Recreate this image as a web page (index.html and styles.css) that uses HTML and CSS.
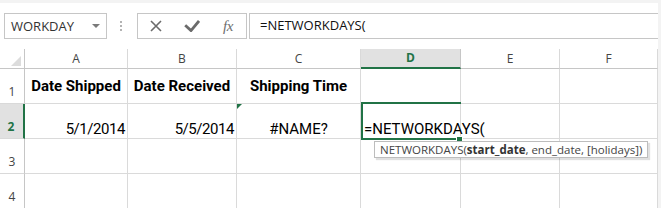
FILE: index.html
```html
<!DOCTYPE html>
<html>
<head>
<meta charset="utf-8">
<link rel="stylesheet" href="styles.css">
</head>
<body>
<div class="app">
  <div class="toolbar">
    <div class="namebox"><span class="name">WORKDAY</span><span class="caret"></span></div>
    <div class="grip"><i></i><i></i><i></i></div>
    <div class="buttons">
      <span class="btn"><svg width="12" height="12" viewBox="0 0 12 12"><path d="M1 1L11 11M11 1L1 11" stroke="#6b6b6b" stroke-width="1.6" fill="none"/></svg></span>
      <span class="btn"><svg width="16" height="12" viewBox="0 0 16 12"><path d="M1.2 5.2L7 10.6L15 1" stroke="#6b6b6b" stroke-width="2.8" fill="none"/></svg></span>
      <span class="btn fx">fx</span>
    </div>
    <div class="formula">=NETWORKDAYS(</div>
  </div>
  <div class="sheet">
    <div class="corner"><svg width="24" height="19" viewBox="0 0 24 19"><polygon points="11,17 21,7 21,17" fill="#dcdcdc"/></svg></div>
    <div class="colhead">A</div>
    <div class="colhead">B</div>
    <div class="colhead">C</div>
    <div class="colhead active">D</div>
    <div class="colhead">E</div>
    <div class="colhead">F</div>

    <div class="rowhead">1</div>
    <div class="cell title">Date Shipped</div>
    <div class="cell title">Date Received</div>
    <div class="cell title">Shipping Time</div>
    <div class="cell"></div>
    <div class="cell"></div>
    <div class="cell"></div>

    <div class="rowhead active">2</div>
    <div class="cell num">5/1/2014</div>
    <div class="cell num">5/5/2014</div>
    <div class="cell err"><span class="flag"></span>#NAME?</div>
    <div class="cell editing">
      <span class="edit">=NETWORKDAYS(</span>
      <span class="selbox"></span>
      <span class="handle"></span>
      <div class="tip">NETWORKDAYS(<b>start_date</b>, end_date, [holidays])</div>
    </div>
    <div class="cell"></div>
    <div class="cell"></div>

    <div class="rowhead">3</div>
    <div class="cell"></div>
    <div class="cell"></div>
    <div class="cell"></div>
    <div class="cell"></div>
    <div class="cell"></div>
    <div class="cell"></div>

    <div class="rowhead">4</div>
    <div class="cell"></div>
    <div class="cell"></div>
    <div class="cell"></div>
    <div class="cell"></div>
    <div class="cell"></div>
    <div class="cell"></div>
  </div>
</div>
</body>
</html>
```

FILE: styles.css
```css
* { box-sizing: border-box; }
html, body { margin: 0; padding: 0; }
body {
  background: #f3f3f3;
  width: 661px;
  height: 208px;
  overflow: hidden;
}
.app {
  margin-top: 3px;
  width: 658px;
  height: 205px;
  background: #ffffff;
  overflow: hidden;
}
.toolbar {
  display: flex;
  align-items: center;
  padding: 10px 0 0 4px;
  height: 36px;
  font-family: "Open Sans", sans-serif;
  font-size: 13px;
  color: #333;
}
.namebox {
  width: 103px;
  height: 26px;
  border: 1px solid #c6c6c6;
  display: flex;
  align-items: center;
  padding-left: 6px;
}
.namebox .name { line-height: 22px; }
.caret {
  margin-left: auto;
  margin-right: 6px;
  width: 0;
  height: 0;
  border-left: 4px solid transparent;
  border-right: 4px solid transparent;
  border-top: 4px solid #7a7a7a;
}
.grip {
  margin-left: 13px;
  width: 2px;
  display: flex;
  flex-direction: column;
  gap: 2px;
}
.grip i {
  display: block;
  width: 2px;
  height: 2px;
  background: #b3b3b3;
}
.buttons {
  margin-left: 15px;
  width: 110px;
  height: 26px;
  border: 1px solid #c6c6c6;
  display: flex;
}
.btn {
  width: 36px;
  display: flex;
  align-items: center;
  justify-content: center;
}
.btn.fx {
  font-family: "Liberation Serif", serif;
  font-style: italic;
  font-size: 15px;
  color: #6e6e6e;
  letter-spacing: -0.5px;
}
.formula {
  margin-left: 2px;
  flex: 1;
  height: 26px;
  border: 1px solid #c6c6c6;
  border-right: none;
  padding-left: 10px;
  line-height: 22px;
  color: #111;
}
.sheet {
  margin-top: 10px;
  display: grid;
  grid-template-columns: 25px 103px 109px 124px 100px 99px 98px;
  grid-template-rows: 20px 35px 35px 35px 35px;
}
.corner {
  border-right: 1px solid #c6c6c6;
  border-bottom: 1px solid #c6c6c6;
}
.corner svg { display: block; }
.colhead {
  border-right: 1px solid #d9d9d9;
  border-bottom: 1px solid #c6c6c6;
  font-family: "Open Sans", sans-serif;
  font-size: 12px;
  line-height: 16px;
  color: #444;
  display: flex;
  align-items: center;
  justify-content: center;
}
.colhead.active {
  background: #e1e1e1;
  border-right-color: #c6c6c6;
  border-bottom: 2px solid #217346;
  color: #217346;
  font-weight: 700;
}
.rowhead {
  border-right: 1px solid #c6c6c6;
  border-bottom: 1px solid #d9d9d9;
  font-family: "Open Sans", sans-serif;
  font-size: 12px;
  line-height: 16px;
  color: #444;
  display: flex;
  align-items: flex-end;
  justify-content: center;
  padding-bottom: 3px;
}
.rowhead.active {
  background: #e1e1e1;
  border-right: 2px solid #217346;
  color: #217346;
  font-weight: 700;
  padding-right: 1px;
}
.cell {
  position: relative;
  border-right: 1px solid #dadada;
  border-bottom: 1px solid #dadada;
  font-family: Roboto, "Liberation Sans", sans-serif;
  font-size: 15px;
  line-height: 18px;
  color: #000;
  display: flex;
  align-items: flex-end;
  white-space: nowrap;
}
.cell.title {
  font-weight: 700;
  align-items: center;
  justify-content: center;
}
.cell.num {
  justify-content: flex-end;
  padding-right: 2px;
  letter-spacing: -0.45px;
}
.cell.err {
  justify-content: center;
}
.flag {
  position: absolute;
  top: 0;
  left: 0;
  width: 0;
  height: 0;
  border-top: 5px solid #217346;
  border-right: 5px solid transparent;
}
.cell.editing {
  padding-left: 3px;
  overflow: visible;
}
.edit {
  position: relative;
  z-index: 1;
}
.selbox {
  position: absolute;
  top: -2px;
  left: 0;
  width: 100px;
  height: 38px;
  border-top: 2px solid #217346;
  border-left: 2px solid #217346;
  border-bottom: 2px solid #217346;
  z-index: 2;
}
.handle {
  position: absolute;
  left: 96px;
  top: 33px;
  width: 5px;
  height: 5px;
  background: #217346;
  box-shadow: 0 0 0 1px #fff;
  z-index: 3;
}
.tip {
  position: absolute;
  left: 13px;
  top: 37px;
  width: 274px;
  height: 17px;
  background: #fff;
  border: 1px solid #bdbdbd;
  box-shadow: 2px 2px 1px rgba(0,0,0,0.12);
  font-family: "Open Sans", sans-serif;
  font-size: 11.5px;
  line-height: 15px;
  color: #444;
  padding-left: 5px;
  z-index: 4;
}
.tip b { font-weight: 700; color: #333; }
```
